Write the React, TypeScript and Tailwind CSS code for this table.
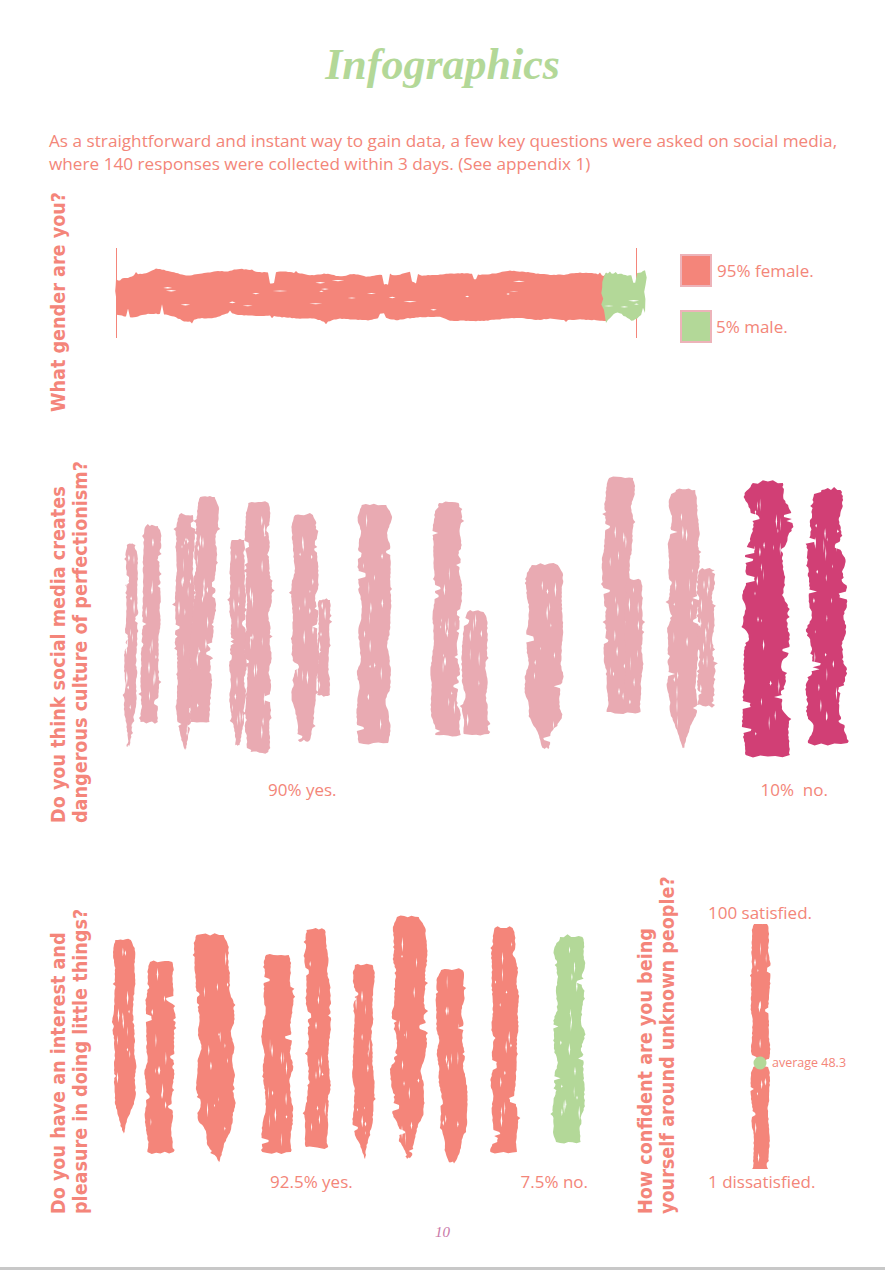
import React from "react";

type Pt = [number, number];
type BrushOpts = { horiz?: boolean; tip?: number; slant?: number; rough?: number };
type Stroke = { x: number; y: number; w: number; h: number; seed: number; fill: string } & BrushOpts;

const PALE = "#E9AAB2";
const DARK = "#D13F75";
const SALMON = "#F4857A";
const GREEN = "#B3D898";

// tiny seeded random so the brush strokes look the same on every render
function rand(seed: number) {
  let a = seed * 9973 + 12345;
  return () => {
    a |= 0;
    a = (a + 0x6d2b79f5) | 0;
    let t = Math.imul(a ^ (a >>> 15), 1 | a);
    t = (t + Math.imul(t ^ (t >>> 7), 61 | t)) ^ t;
    return ((t ^ (t >>> 14)) >>> 0) / 4294967296;
  };
}

// smooth 1d noise: random knots every `seg` units, cosine interpolated
function smooth(r: () => number, len: number, seg: number) {
  const knots = Array.from({ length: Math.ceil(len / seg) + 2 }, () => r() * 2 - 1);
  return (v: number) => {
    const f = v / seg;
    const i = Math.floor(f);
    const t = (1 - Math.cos((f - i) * Math.PI)) / 2;
    return knots[i] * (1 - t) + knots[i + 1] * t;
  };
}

function brush(x: number, y: number, w: number, h: number, seed: number, o: BrushOpts = {}) {
  const r = rand(seed);
  const len = o.horiz ? w : h;
  const wid = o.horiz ? h : w;
  const rough = o.rough ?? 1;
  const tip = o.tip ?? 0;
  const n = Math.max(8, Math.round(len / 2));
  const na = smooth(r, len, 14);
  const nb = smooth(r, len, 14);
  const nc = smooth(r, len, 40);
  const a: Pt[] = [];
  const b: Pt[] = [];
  let notchA = 0;
  let notchB = 0;
  let depthA = 0;
  let depthB = 0;
  for (let i = 0; i <= n; i++) {
    const t = i / n;
    const v = t * len;
    const c = wid / 2 + (o.slant ?? 0) * (t - 0.5) + nc(v) * wid * 0.06;
    let half = wid * 0.45;
    if (t > 0.82) half *= 1 - tip * 0.9 * ((t - 0.82) / 0.18);
    if (t < 0.04) half *= 0.8 + (t / 0.04) * 0.2;
    if (notchA <= 0 && r() < 0.035 * rough) {
      notchA = 1 + Math.floor(r() * 3);
      depthA = r() * wid * 0.22;
    }
    if (notchB <= 0 && r() < 0.035 * rough) {
      notchB = 1 + Math.floor(r() * 3);
      depthB = r() * wid * 0.22;
    }
    const ja = (r() - 0.5) * 0.9 * rough + (notchA > 0 ? depthA : 0) - (r() < 0.03 * rough ? r() * 3 : 0);
    const jb = (r() - 0.5) * 0.9 * rough + (notchB > 0 ? depthB : 0) - (r() < 0.03 * rough ? r() * 3 : 0);
    notchA--;
    notchB--;
    a.push([c - half - na(v) * wid * 0.07 * rough + ja, v]);
    b.push([c + half + nb(v) * wid * 0.07 * rough - jb, v]);
  }
  const cap = (from: Pt, to: Pt, out: number): Pt[] => {
    const res: Pt[] = [];
    for (let j = 1; j < 6; j++) {
      const t = j / 6;
      res.push([from[0] + (to[0] - from[0]) * t, from[1] + (to[1] - from[1]) * t + out * (r() - 0.2) * 2.5 * rough]);
    }
    return res;
  };
  const pts = [...a, ...cap(a[n], b[n], 1), ...[...b].reverse(), ...cap(b[0], a[0], -1)];
  const m = (p: Pt) => {
    const X = o.horiz ? x + p[1] : x + p[0];
    const Y = o.horiz ? y + p[0] : y + p[1];
    return `${X.toFixed(1)} ${Y.toFixed(1)}`;
  };
  const body = "M" + pts.map(m).join("L") + "Z";

  // thin streaks of paper showing through, along the stroke
  const holes: string[] = [];
  const hn = Math.round((len / 16) * rough);
  for (let k = 0; k < hn; k++) {
    const v = len * (0.06 + r() * 0.88);
    const u = wid * (0.18 + r() * 0.64);
    const l = 3 + r() * 12;
    const ww = 0.5 + r() * 1.2;
    const q: Pt[] = [
      [u, v - l / 2],
      [u + ww / 2, v],
      [u, v + l / 2],
      [u - ww / 2, v],
    ];
    holes.push("M" + q.map(m).join("L") + "Z");
  }
  return { body, holes };
}

function Brush({ x, y, w, h, seed, fill, ...o }: Stroke) {
  const { body, holes } = brush(x, y, w, h, seed, o);
  return (
    <g>
      <path d={body} fill={fill} />
      {holes.map((d, i) => (
        <path key={i} d={d} fill="#fff" />
      ))}
    </g>
  );
}

const perfection: Stroke[] = [
  { x: 124, y: 545, w: 13, h: 200, seed: 1, fill: PALE, tip: 1, slant: -3 },
  { x: 141, y: 526, w: 19, h: 196, seed: 2, fill: PALE, slant: -4 },
  { x: 175, y: 515, w: 19, h: 233, seed: 3, fill: PALE, tip: 1 },
  { x: 192, y: 497, w: 23, h: 225, seed: 4, fill: PALE, slant: -6 },
  { x: 229, y: 540, w: 17, h: 205, seed: 5, fill: PALE, tip: 0.8 },
  { x: 245, y: 503, w: 27, h: 249, seed: 6, fill: PALE },
  { x: 292, y: 515, w: 27, h: 225, seed: 7, fill: PALE, tip: 0.6 },
  { x: 317, y: 600, w: 13, h: 95, seed: 8, fill: PALE },
  { x: 357, y: 505, w: 33, h: 238, seed: 9, fill: PALE },
  { x: 432, y: 503, w: 29, h: 232, seed: 10, fill: PALE },
  { x: 462, y: 612, w: 26, h: 122, seed: 11, fill: PALE },
  { x: 525, y: 565, w: 38, h: 183, seed: 12, fill: PALE, tip: 1 },
  { x: 604, y: 478, w: 30, h: 234, seed: 13, fill: PALE },
  { x: 624, y: 580, w: 18, h: 132, seed: 14, fill: PALE },
  { x: 668, y: 490, w: 32, h: 258, seed: 15, fill: PALE, tip: 1 },
  { x: 697, y: 570, w: 17, h: 135, seed: 16, fill: PALE, rough: 1.6 },
  { x: 745, y: 483, w: 45, h: 272, seed: 17, fill: DARK, rough: 1.6 },
  { x: 807, y: 490, w: 38, h: 253, seed: 18, fill: DARK, rough: 1.6 },
];

const pleasure: Stroke[] = [
  { x: 113, y: 940, w: 22, h: 192, seed: 21, fill: SALMON, tip: 1 },
  { x: 145, y: 962, w: 30, h: 190, seed: 22, fill: SALMON },
  { x: 197, y: 935, w: 38, h: 226, seed: 23, fill: SALMON, tip: 1, slant: 6 },
  { x: 262, y: 955, w: 31, h: 197, seed: 24, fill: SALMON },
  { x: 305, y: 930, w: 25, h: 217, seed: 25, fill: SALMON },
  { x: 352, y: 965, w: 22, h: 192, seed: 26, fill: SALMON, tip: 1 },
  { x: 392, y: 917, w: 34, h: 240, seed: 27, fill: SALMON, tip: 1 },
  { x: 437, y: 970, w: 29, h: 192, seed: 28, fill: SALMON, tip: 0.8 },
  { x: 490, y: 928, w: 27, h: 224, seed: 29, fill: SALMON },
  { x: 555, y: 937, w: 30, h: 205, seed: 30, fill: GREEN, rough: 1.4 },
];

function Question({ lines, className }: { lines: string[]; className: string }) {
  return (
    <div
      className={`${className} shrink-0 whitespace-nowrap [writing-mode:vertical-rl] rotate-180 font-['DejaVu_Sans_Condensed','DejaVu_Sans',sans-serif] font-bold text-[19.6px] leading-[22px] text-[#F4857A]`}
    >
      {lines.map((l, i) => (
        <React.Fragment key={i}>
          {i > 0 && <br />}
          {l}
        </React.Fragment>
      ))}
    </div>
  );
}

export default function App() {
  return (
    <div className="w-[885px] h-[1270px] bg-white flex flex-col font-['Open_Sans',sans-serif] text-[#F38679] overflow-hidden">
      {/* Title */}
      <h1 className="pt-[43px] text-center text-[44px] leading-[44px] italic font-bold font-['Liberation_Serif',serif] text-[#B3D898]">
        Infographics
      </h1>

      {/* Intro */}
      <p className="mt-[42px] pl-[49px] text-[17.2px] leading-[23px] whitespace-nowrap">
        As a straightforward and instant way to gain data, a few key questions were asked on social media,
        <br />
        where 140 responses were collected within 3 days. (See appendix 1)
      </p>

      {/* Gender */}
      <div className="mt-[15px] h-[222px] flex pl-[48px]">
        <Question className="w-[22px] h-[222px]" lines={["What gender are you?"]} />
        <svg width={590} height={222} viewBox="70 190 590 222" className="shrink-0">
          <line x1={116.5} y1={248} x2={116.5} y2={338} stroke={SALMON} strokeWidth={1} />
          <line x1={636.5} y1={248} x2={636.5} y2={338} stroke={SALMON} strokeWidth={1} />
          <Brush x={116} y={270} w={490} h={50} seed={41} fill={SALMON} horiz rough={0.7} />
          <Brush x={604} y={271} w={41} h={47} seed={42} fill={GREEN} horiz rough={1.6} />
        </svg>
        <div className="ml-[20px] mt-[64px] flex flex-col gap-[23px] text-[17px] leading-[33px]">
          <div className="flex items-center gap-[5px]">
            <span className="w-[32px] h-[33px] bg-[#F4857A] border-2 border-[#EDB3B9]" />
            <span>95% female.</span>
          </div>
          <div className="flex items-center gap-[4px]">
            <span className="w-[32px] h-[33px] bg-[#B3D898] border-2 border-[#EDB3B9]" />
            <span>5% male.</span>
          </div>
        </div>
      </div>

      {/* Perfectionism */}
      <div className="mt-[43px] h-[368px] flex pl-[48px]">
        <Question
          className="w-[44px] h-[368px]"
          lines={["Do you think social media creates", "dangerous culture of perfectionism?"]}
        />
        <div className="flex flex-col w-[768px]">
          <svg width={768} height={315} viewBox="92 455 768 315">
            {perfection.map((s, i) => (
              <Brush key={i} {...s} />
            ))}
          </svg>
          <div className="mt-[8px] flex text-[17px] leading-[24px]">
            <span className="ml-[176px]">90% yes.</span>
            <span className="ml-auto mr-[32px]">10%&nbsp; no.</span>
          </div>
        </div>
      </div>

      {/* Pleasure + confidence */}
      <div className="mt-[47px] h-[344px] flex pl-[48px]">
        <Question
          className="w-[44px] h-[344px]"
          lines={["Do you have an interest and", "pleasure in doing little things?"]}
        />
        <div className="flex flex-col w-[540px] shrink-0">
          <svg width={540} height={300} viewBox="92 870 540 300">
            {pleasure.map((s, i) => (
              <Brush key={i} {...s} />
            ))}
          </svg>
          <div className="flex text-[17px] leading-[24px]">
            <span className="ml-[178px]">92.5% yes.</span>
            <span className="ml-auto mr-[44px]">7.5% no.</span>
          </div>
        </div>
        <Question
          className="ml-[3px] w-[44px] h-[344px]"
          lines={["How confident are you being", "yourself around unknown people?"]}
        />
        <div className="pl-[29px] flex flex-col">
          <span className="mt-[32px] text-[17px] leading-[22px]">100 satisfied.</span>
          <div className="flex">
            <svg width={30} height={245} viewBox="745 925 30 245" className="ml-[37px] shrink-0">
              <Brush x={751} y={925} w={19} h={135} seed={51} fill={SALMON} rough={0.9} />
              <Brush x={751} y={1068} w={19} h={102} seed={52} fill={SALMON} rough={0.9} />
              <circle cx={760} cy={1064} r={6.5} fill={GREEN} />
            </svg>
            <span className="ml-[-3px] mt-[131px] text-[12.5px] leading-[16px] whitespace-nowrap">average 48.3</span>
          </div>
          <span className="mt-[2px] text-[17px] leading-[22px]">1 dissatisfied.</span>
        </div>
      </div>

      {/* Page number */}
      <div className="mt-[8px] text-center text-[15px] leading-[20px] italic font-['Liberation_Serif',serif] text-[#C978A8]">
        10
      </div>

      <div className="mt-auto h-[3px] bg-[#C8C8C8]" />
    </div>
  );
}
